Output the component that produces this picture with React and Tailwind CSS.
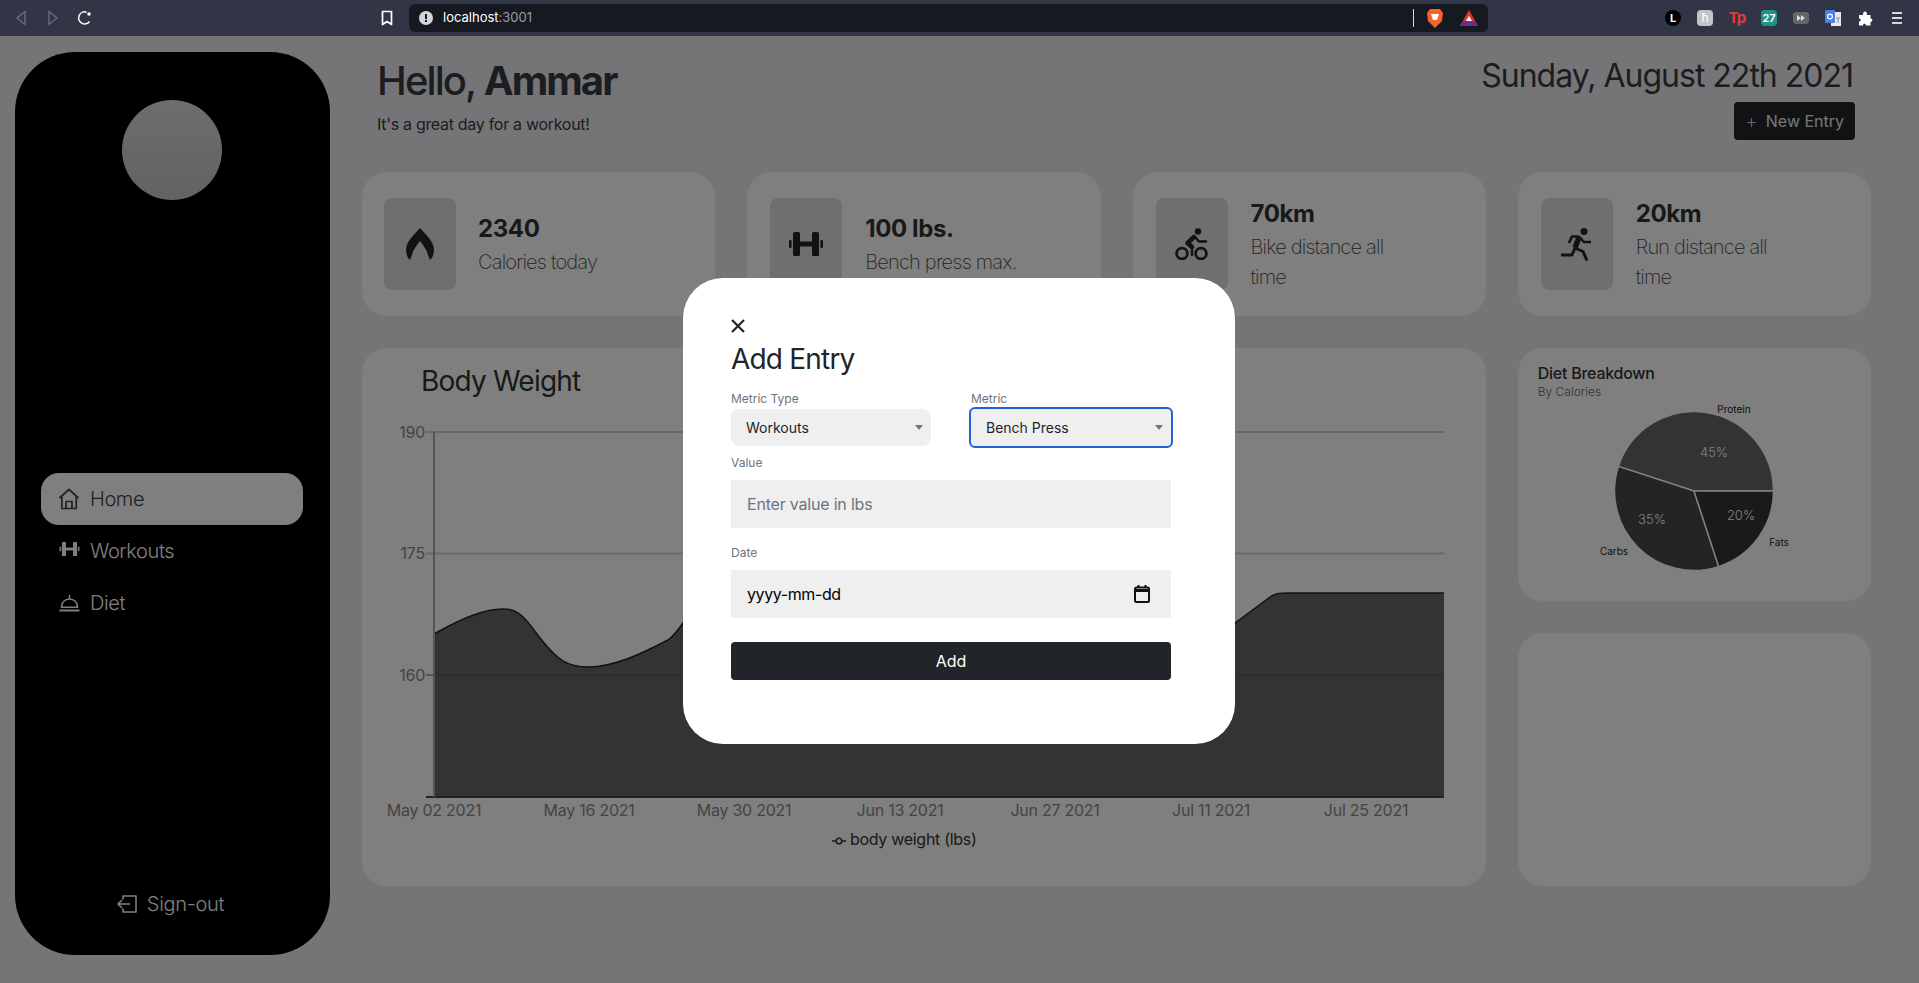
const Dumbbell = ({ width, height, className }) => (
  <svg width={width} height={height} viewBox="0 0 34 24" fill="currentColor" className={className}>
    <rect x="0" y="8" width="2.6" height="8" rx="1" />
    <rect x="4" y="0" width="7" height="24" rx="1.5" />
    <rect x="11" y="9.5" width="12" height="5" />
    <rect x="23" y="0" width="7" height="24" rx="1.5" />
    <rect x="31.4" y="8" width="2.6" height="8" rx="1" />
  </svg>
);

const Flame = () => (
  <svg width="28" height="32" viewBox="0 0 28 32" fill="#212529">
    <path d="M14 0C19 6 28 13 28 22C28 26 26.5 30 24 32L22 27C21 22 17 17 14 13C11 17 7 22 6 27L4 32C1.5 30 0 26 0 22C0 13 9 6 14 0Z" />
  </svg>
);

const Bike = () => (
  <svg width="33" height="32" viewBox="0 0 33 32" fill="none" stroke="#212529" strokeLinecap="round" strokeLinejoin="round">
    <circle cx="23" cy="3.4" r="3.2" fill="#212529" stroke="none" />
    <circle cx="7" cy="25.5" r="5.4" strokeWidth="2.8" />
    <circle cx="26" cy="25.5" r="5.4" strokeWidth="2.8" />
    <path d="M19 9L12.5 15L17 19" strokeWidth="4.5" />
    <path d="M17 19V27" strokeWidth="2.4" />
    <path d="M20 9L24 13.5H31" strokeWidth="2.6" />
  </svg>
);

const Runner = () => (
  <svg width="31" height="33" viewBox="0 0 31 33" fill="none" stroke="#212529" strokeLinejoin="round">
    <circle cx="23" cy="3.5" r="3.5" fill="#212529" stroke="none" />
    <path d="M18 9.5L14 20" strokeWidth="5.5" />
    <path d="M14 20L22 23.5L26 32.5" strokeWidth="3" />
    <path d="M14 20L11 27H0" strokeWidth="3" />
    <path d="M18 8.5L23 14H30" strokeWidth="2.6" />
    <path d="M18 8.5H11L8 15" strokeWidth="2.6" />
  </svg>
);

const HomeIcon = () => (
  <svg width="22" height="22" viewBox="0 0 22 22" fill="none" stroke="currentColor" strokeWidth="1.7" strokeLinejoin="round">
    <path d="M1.5 10L11 1.5L20.5 10M3.8 8.5V20.5H18.2V8.5" />
    <path d="M8 20.5V13.5H14V20.5" />
  </svg>
);

const DietIcon = () => (
  <svg width="21" height="18" viewBox="0 0 21 18" fill="none" stroke="currentColor" strokeWidth="1.5">
    <path d="M0.5 16.5H20.5" strokeWidth="2" />
    <path d="M2.5 13.2C2.5 8.5 6 5 10.5 5C15 5 18.5 8.5 18.5 13.2Z" />
    <path d="M10.5 1V5" />
  </svg>
);

const SignOutIcon = () => (
  <svg width="20" height="18" viewBox="0 0 20 18" fill="none" stroke="currentColor" strokeWidth="1.6" strokeLinejoin="round">
    <path d="M6 4.5V1H19V17H6V13.5" />
    <path d="M13 9H1M5 5L1 9L5 13" />
  </svg>
);

const Arrow = () => (
  <svg width="8" height="5" viewBox="0 0 8 5" fill="#777" className="pointer-events-none absolute right-[8px] top-[16px]">
    <path d="M0 0H8L4 5Z" />
  </svg>
);

const BrowserBar = () => (
  <div className="flex h-9 items-center bg-[#323546] pl-[5px] pr-[6px]">
    <div className="flex w-8 justify-center">
      <svg width="12" height="16" viewBox="0 0 12 16" fill="none" stroke="#6d7080" strokeWidth="1.3"><path d="M10 1.5V14.5L2 8Z" /></svg>
    </div>
    <div className="flex w-8 justify-center">
      <svg width="12" height="16" viewBox="0 0 12 16" fill="none" stroke="#6d7080" strokeWidth="1.3"><path d="M2 1.5V14.5L10 8Z" /></svg>
    </div>
    <div className="flex w-8 justify-center">
      <svg width="16" height="16" viewBox="0 0 16 16" fill="none" stroke="#fff" strokeWidth="1.6"><path d="M12.5 11.5A6 6 0 1 1 9.5 2.2" /><circle cx="12" cy="4" r="1.8" fill="#fff" stroke="none" /></svg>
    </div>
    <div className="ml-[270px] flex w-8 justify-center">
      <svg width="12" height="16" viewBox="0 0 12 16" fill="none" stroke="#fff" strokeWidth="1.7" strokeLinejoin="round"><path d="M1.5 1.5H10.5V14.5L6 11.5L1.5 14.5Z" /></svg>
    </div>
    <div className="ml-[6px] flex h-7 w-[1079px] items-center rounded-md bg-[#161922] pl-[10px]">
      <svg width="14" height="14" viewBox="0 0 14 14"><circle cx="7" cy="7" r="7" fill="#d4d5da" /><rect x="6" y="3" width="2" height="5" fill="#161922" /><rect x="6" y="9" width="2" height="2" fill="#161922" /></svg>
      <span className="ml-[10px] text-[13px] text-white">localhost<span className="text-[#9a9ca6]">:3001</span></span>
      <div className="ml-auto flex items-center">
        <div className="h-[18px] w-px bg-[#d8d8d8]" />
        <svg width="16" height="19" viewBox="0 0 16 19" className="ml-[13px]"><path d="M3 0H13L16 4L15 12L8 19L1 12L0 4Z" fill="#f1642a" /><path d="M4 5H12L10 11H6Z" fill="#fff" /></svg>
        <svg width="18" height="16" viewBox="0 0 18 16" className="ml-[17px] mr-[10px]"><path d="M9 0L18 16H0Z" fill="#e2352c" /><path d="M0 16L3 11H15L18 16Z" fill="#6b2d91" /><path d="M9 6L12 11H6Z" fill="#fff" /></svg>
      </div>
    </div>
    <div className="ml-auto flex items-center">
      <div className="flex w-8 justify-center">
        <span className="flex h-4 w-4 items-center justify-center rounded-full bg-black text-[11px] font-bold text-white">L</span>
      </div>
      <div className="flex w-8 justify-center">
        <span className="flex h-4 w-4 items-center justify-center rounded-sm bg-[#c4c4c4] text-[12px] text-white">ħ</span>
      </div>
      <div className="flex w-8 justify-center">
        <span className="text-[15px] font-bold leading-4 tracking-tighter text-[#e63a35]">Tp</span>
      </div>
      <div className="flex w-8 justify-center">
        <span className="flex h-4 w-4 items-center justify-center rounded-sm bg-[#1f9485] text-[11px] font-semibold text-white">27</span>
      </div>
      <div className="flex w-8 justify-center">
        <span className="flex h-3 w-4 items-center justify-center rounded-[3px] bg-[#666]">
          <svg width="8" height="6" viewBox="0 0 8 6" fill="#ddd"><path d="M0 0L4 3L0 6ZM4 0L8 3L4 6Z" /></svg>
        </span>
      </div>
      <div className="flex w-8 justify-center">
        <svg width="16" height="16" viewBox="0 0 16 16"><rect x="6" y="2" width="10" height="14" fill="#e8e8e8" /><rect x="0" y="0" width="10" height="13" rx="1" fill="#4a80ea" /><circle cx="5" cy="6.5" r="2.4" fill="none" stroke="#fff" strokeWidth="1.2" /><path d="M11 8H15M13 8V13" stroke="#888" strokeWidth="1" /></svg>
      </div>
      <div className="flex w-8 justify-center">
        <svg width="15" height="15" viewBox="0 0 15 15" fill="#fff"><path d="M1 4H5C5 1.5 5.7 0.5 7 0.5C8.3 0.5 9 1.5 9 4H12.5V7.5C15 7.5 15 11 12.5 11V14.5H8C8 12 5 12 5 14.5H1V10.5C3.5 10.5 3.5 7.5 1 7.5Z" /></svg>
      </div>
      <div className="flex w-8 justify-center">
        <svg width="14" height="14" viewBox="0 0 14 14" stroke="#d8d8dc" strokeWidth="1.8"><path d="M2 2H12M2 7H12M2 12H12" /></svg>
      </div>
    </div>
  </div>
);

const Sidebar = () => (
  <aside className="ml-[15px] mt-4 flex h-[903px] w-[315px] shrink-0 flex-col rounded-[60px] bg-black">
    <div className="ml-[107px] mt-12 h-[100px] w-[100px] rounded-full bg-gradient-to-b from-[#dcdcdc] to-[#c4c4c4]" />
    <nav className="ml-[26px] mr-[27px] mt-[273px] flex flex-col text-[20px] font-light tracking-[-0.4px]">
      <a className="flex h-[52px] items-center gap-[10px] rounded-[18px] bg-white pl-[17px] text-[#444]">
        <HomeIcon /> Home
      </a>
      <a className="flex h-[52px] items-center gap-[10px] pl-[17px] text-white">
        <span className="flex w-[22px] justify-center">
          <Dumbbell width={21} height={14} className="-mt-[5px]" />
        </span>
        Workouts
      </a>
      <a className="flex h-[52px] items-center gap-[10px] pl-[17px] text-white">
        <span className="flex w-[22px] justify-center">
          <DietIcon />
        </span>
        Diet
      </a>
    </nav>
    <div className="mb-[36px] mt-auto flex items-center justify-center gap-[10px] pr-1 text-[20px] font-light tracking-[-0.3px] text-white">
      <SignOutIcon /> Sign-out
    </div>
  </aside>
);

const StatCard = ({ icon, value, label, first }) => (
  <div className={first ? "flex h-[144px] items-center rounded-[25px] bg-white pl-[22px]" : "flex h-[144px] items-center rounded-[25px] bg-white pl-[23px]"}>
    <div className="flex h-[92px] w-[72px] shrink-0 items-center justify-center rounded-lg bg-[#dedee2]">
      {icon}
    </div>
    <div className={first ? "ml-[22px] w-[160px]" : "ml-[23px] w-[160px]"}>
      <div className="text-[24px] font-bold leading-9 tracking-[-0.4px] text-[#333]">{value}</div>
      <div className="text-[20px] font-extralight leading-[30px] tracking-[-0.8px] text-[#444]">{label}</div>
    </div>
  </div>
);

const BodyWeightChart = () => (
  <svg width="1124" height="488" viewBox="362 398 1124 488" className="block">
    <path d="M426 432H1444M426 553.5H1444" stroke="#d4d4d4" strokeWidth="2" />
    <path
      d="M434 634C460 619 486 608 505 609C520 609 528 622 540 638C558 661 568 667 588 667C615 667 645 652 668 640C685 628 690 600 720 590L1180 640L1235 623L1270 597C1276 593 1280 593 1290 593H1444V797H434Z"
      fill="#666"
    />
    <path
      d="M434 634C460 619 486 608 505 609C520 609 528 622 540 638C558 661 568 667 588 667C615 667 645 652 668 640C685 628 690 600 720 590L1180 640L1235 623L1270 597C1276 593 1280 593 1290 593H1444"
      fill="none"
      stroke="#222"
      strokeWidth="1.5"
    />
    <path d="M434 675H1444" stroke="#5a5a5a" strokeWidth="1.5" />
    <path d="M426 675H434" stroke="#aaa" strokeWidth="2" />
    <path d="M426 797H1444" stroke="#444" strokeWidth="2" />
    <path d="M434 432V797" stroke="#aaa" strokeWidth="2" />
    <g fontSize="16" fill="#888" textAnchor="end" letterSpacing="-0.25">
      <text x="425" y="438">190</text>
      <text x="425" y="559">175</text>
      <text x="425" y="681">160</text>
    </g>
    <g fontSize="16" fill="#888" textAnchor="middle" letterSpacing="-0.25">
      <text x="434" y="816">May 02 2021</text>
      <text x="589" y="816">May 16 2021</text>
      <text x="744" y="816">May 30 2021</text>
      <text x="900" y="816">Jun 13 2021</text>
      <text x="1055" y="816">Jun 27 2021</text>
      <text x="1211" y="816">Jul 11 2021</text>
      <text x="1366" y="816">Jul 25 2021</text>
    </g>
    <path d="M832 841H846" stroke="#333" strokeWidth="1.5" />
    <circle cx="839" cy="841" r="2.8" fill="#fff" stroke="#333" strokeWidth="1.5" />
    <text x="850" y="845" fontSize="16" fill="#333" letterSpacing="-0.3">body weight (lbs)</text>
  </svg>
);

const DietPie = () => (
  <svg width="353" height="201" viewBox="1518 400 353 201" className="block">
    <g stroke="#fff" strokeWidth="1.5">
      <path d="M1694 491L1773.5 491A79.5 79.5 0 0 0 1618.4 466.4Z" fill="#666" />
      <path d="M1694 491L1618.4 466.4A79.5 79.5 0 0 0 1718.6 566.6Z" fill="#484848" />
      <path d="M1694 491L1718.6 566.6A79.5 79.5 0 0 0 1773.5 491Z" fill="#343434" />
    </g>
    <g fontSize="13" fill="#fff" fontWeight="300" textAnchor="middle">
      <text x="1714" y="456.5">45%</text>
      <text x="1652" y="523.5">35%</text>
      <text x="1741" y="519.5">20%</text>
    </g>
    <g fontSize="10" fill="#222" textAnchor="middle">
      <text x="1734" y="413">Protein</text>
      <text x="1779" y="546">Fats</text>
      <text x="1614" y="555">Carbs</text>
    </g>
  </svg>
);

const AddEntryModal = () => (
  <div className="absolute inset-x-0 bottom-0 top-9 bg-black/50">
    <div className="ml-[683px] mt-[242px] h-[466px] w-[552px] rounded-[40px] bg-white pl-12 pr-16 pt-[40px]">
      <svg width="16" height="16" viewBox="0 0 16 16" stroke="#212529" strokeWidth="2.2" className="-ml-[1px]"><path d="M2 2L14 14M14 2L2 14" /></svg>
      <h2 className="mt-2 text-[28px] font-normal leading-[34px] tracking-[-0.8px] text-[#212529]">Add Entry</h2>
      <div className="mt-[15px] grid grid-cols-2 gap-x-10">
        <div>
          <label className="block text-[12px] leading-4 text-[#6c757d]">Metric Type</label>
          <div className="relative mt-[2px]">
            <select className="h-[37px] w-full appearance-none rounded-lg bg-[#efefef] pl-[15px] text-[14px] text-[#212529] outline-none">
              <option>Workouts</option>
            </select>
            <Arrow />
          </div>
        </div>
        <div>
          <label className="block text-[12px] leading-4 text-[#6c757d]">Metric</label>
          <div className="relative mt-[2px]">
            <select className="h-[37px] w-full appearance-none rounded-[4px] bg-[#efefef] pl-[15px] text-[14px] text-[#212529] outline-2 outline-offset-0 outline-[#1f63d6]">
              <option>Bench Press</option>
            </select>
            <Arrow />
          </div>
        </div>
      </div>
      <label className="mt-[9px] block text-[12px] leading-4 text-[#6c757d]">Value</label>
      <input
        type="text"
        placeholder="Enter value in lbs"
        className="mt-[9px] h-12 w-full bg-[#efefef] px-4 text-[16px] tracking-[-0.2px] outline-none placeholder:text-[#6c757d]"
      />
      <label className="mt-[17px] block text-[12px] leading-4 text-[#6c757d]">Date</label>
      <div className="mt-[9px] flex h-12 w-full items-center justify-between bg-[#efefef] pl-4 pr-[21px] text-[16px] tracking-[-0.4px] text-black">
        yyyy-mm-dd
        <svg width="16" height="18" viewBox="0 0 16 18" fill="none" stroke="#111" strokeWidth="2">
          <rect x="1" y="2.5" width="14" height="14.5" rx="1.5" />
          <path d="M1 5.5H15" strokeWidth="3" />
          <path d="M4.5 0V3M11.5 0V3" />
        </svg>
      </div>
      <button className="mt-6 h-[38px] w-full rounded bg-[#212529] text-[16px] text-white">Add</button>
    </div>
  </div>
);

const App = () => {
  return (
    <div className="relative h-[983px] w-[1919px] overflow-hidden bg-[#ebebef] [font-family:Inter,sans-serif]">
      <BrowserBar />
      <div className="flex">
        <Sidebar />
        <main className="ml-8 w-[1509px]">
          <header className="flex h-[136px] justify-between pl-[15px] pr-4">
            <div>
              <h1 className="mt-[23px] text-[40px] font-medium leading-[44px] tracking-[-1.9px] text-[#373a40]">
                Hello, <span className="font-bold">Ammar</span>
              </h1>
              <p className="mt-[9px] text-[16px] leading-6 tracking-[-0.3px] text-[#373a40]">It's a great day for a workout!</p>
            </div>
            <div className="flex flex-col items-end">
              <div className="mr-[2px] mt-5 text-[32px] leading-10 tracking-[-1px] text-[#373a40]">Sunday, August 22th 2021</div>
              <button className="mt-[6px] flex h-[38px] w-[121px] items-center justify-center gap-2 rounded bg-[#212529] text-[16px] text-[#eee]">
                <span className="text-[20px] font-extralight leading-none">+</span> New Entry
              </button>
            </div>
          </header>
          <div className="grid grid-cols-4 gap-8">
            <StatCard first icon={<Flame />} value="2340" label="Calories today" />
            <StatCard icon={<Dumbbell width={34} height={24} className="text-[#212529]" />} value="100 lbs." label="Bench press max." />
            <StatCard icon={<Bike />} value="70km" label="Bike distance all time" />
            <StatCard icon={<Runner />} value="20km" label="Run distance all time" />
            <section className="col-span-3 h-[538px] rounded-[25px] bg-white">
              <h2 className="pl-[59px] pt-4 text-[28px] leading-[34px] tracking-[-0.8px] text-[#333]">Body Weight</h2>
              <BodyWeightChart />
            </section>
            <div className="flex flex-col gap-8">
              <section className="h-[253px] rounded-[25px] bg-white">
                <h3 className="pl-5 pt-[14px] text-[16px] font-medium leading-[22px] tracking-[-0.25px] text-[#333]">Diet Breakdown</h3>
                <p className="pl-5 text-[12px] font-light leading-4 text-[#666]">By Calories</p>
                <DietPie />
              </section>
              <section className="h-[253px] rounded-[25px] bg-white" />
            </div>
          </div>
        </main>
      </div>
      <AddEntryModal />
    </div>
  );
};

export default App;
